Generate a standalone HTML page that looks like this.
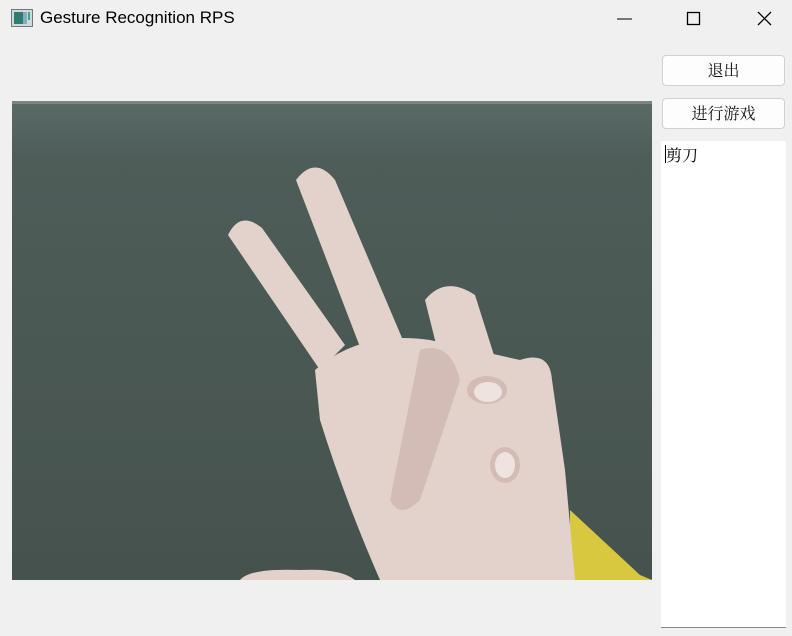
<!DOCTYPE html>
<html><head><style>
body{margin:0;width:792px;height:636px;background:#f0f0f0;position:relative;overflow:hidden;font-family:"Liberation Sans","Noto Sans CJK SC",sans-serif}
.title{position:absolute;left:40px;top:8px;font-size:17px;color:#000}
.btn{position:absolute;left:662px;width:121px;height:29px;border:1px solid #d0d0d0;border-radius:4px;background:#fdfdfd;font-family:"Noto Serif CJK SC",serif;font-size:16px;text-align:center;line-height:28px;color:#111}
.tb{position:absolute;left:661px;top:141px;width:125px;height:486px;background:#fff;border-bottom:1px solid #888}
</style></head><body>
<svg style="position:absolute;left:11px;top:9px" width="22" height="18"><rect x="0.5" y="0.5" width="21" height="17" fill="#cfd8dc" stroke="#777"/><rect x="3" y="3" width="9" height="12" fill="#2e7d6e"/><rect x="12" y="3" width="4" height="12" fill="#8ab"/><rect x="17" y="3" width="2" height="8" fill="#3a8"/></svg>
<div class="title">Gesture Recognition RPS</div>
<svg style="position:absolute;left:612px;top:10px" width="170" height="20"><line x1="5" y1="9" x2="20" y2="9" stroke="#000"/><rect x="75.5" y="2.5" width="12" height="12" fill="none" stroke="#000" stroke-width="1.3"/><path d="M146 2 L159 15 M159 2 L146 15" stroke="#000" stroke-width="1.3"/></svg>
<div class="btn" style="top:55px">退出</div>
<div class="btn" style="top:98px">进行游戏</div>
<div class="tb"><div style="position:absolute;left:4px;top:4px;width:1px;height:18px;background:#000"></div><div style="position:absolute;left:5px;top:2px;font-family:'Noto Serif CJK SC',serif;font-size:16px">剪刀</div></div>
<svg style="position:absolute;left:12px;top:101px" width="640" height="479" viewBox="12 101 640 479">
<defs><linearGradient id="bg" x1="0" y1="0" x2="0" y2="1"><stop offset="0" stop-color="#5a6a66"/><stop offset="0.12" stop-color="#4e5d59"/><stop offset="1" stop-color="#46524e"/></linearGradient></defs>
<rect x="12" y="101" width="640" height="479" fill="url(#bg)"/>
<rect x="12" y="101" width="640" height="3" fill="#7d8580"/>
<path d="M570 510 L640 575 L652 580 L570 580 Z" fill="#d8c840"/>
<g fill="#e3d2cc">
<path d="M228 235 Q240 210 262 228 L345 345 L320 370 Z"/>
<path d="M296 180 Q315 155 335 180 L405 345 L365 360 Z"/>
<path d="M425 300 Q445 275 475 295 L505 390 L450 400 Z"/>
<path d="M315 370 Q360 330 430 340 L520 360 Q550 350 552 380 L565 470 L575 580 L380 580 Q345 500 320 420 Z"/>
<path d="M240 580 Q250 568 300 570 Q340 568 355 580 Z"/>
</g>
<g fill="#d4bcb6"><path d="M420 350 Q450 340 460 380 L420 500 Q400 520 390 500 Z"/><ellipse cx="487" cy="390" rx="20" ry="14"/><ellipse cx="505" cy="465" rx="15" ry="18"/></g>
<g fill="#efe3df"><ellipse cx="488" cy="392" rx="14" ry="10"/><ellipse cx="505" cy="465" rx="10" ry="13"/></g>
</svg>
</body></html>
